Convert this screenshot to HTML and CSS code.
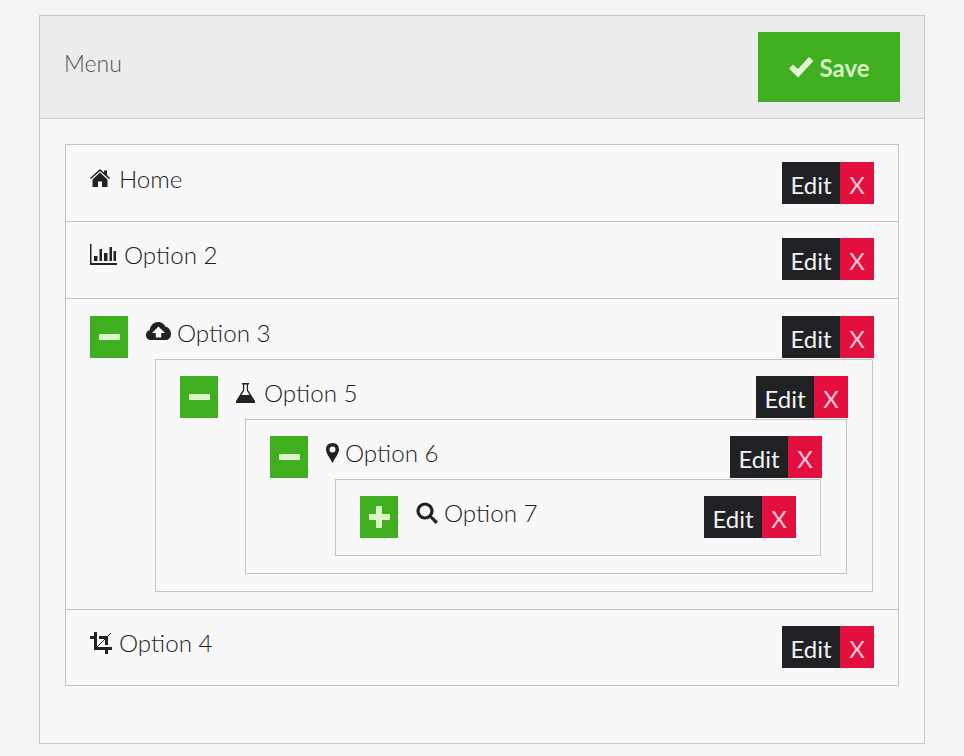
FILE: index.html
```html
<!DOCTYPE html>
<html lang="en">
<head>
  <meta charset="UTF-8" />
  <title>Menu</title>
  <link rel="stylesheet" href="styles.css">
</head>
<body>

  <div class="panel">
    <div class="panel-heading">
      <span class="panel-title">Menu</span>
      <button class="btn-save">
        <svg class="ico-check" viewBox="0 0 26 22"><path d="M1 12.5 L5 8.5 L10 13 L21 1 L25.500 5 L10 21.500 Z"/></svg>
        Save
      </button>
    </div>

    <div class="panel-body">
      <ul class="tree">
        <li class="item">
          <div class="row">
            <span class="label">
              <svg class="ico ico-home" viewBox="0 0 20 18"><path d="M10 0 L14 3.500 V1.500 H17 V6 L20 9 L19 10 L10 2 L1 10 L0 9 Z M2.500 10.500 L10 3.500 L17.500 10.500 V18 H12 V12.500 H8 V18 H2.500 Z"/></svg>
              Home
            </span>
            <span class="actions"><a class="edit">Edit</a><a class="del">X</a></span>
          </div>
        </li>

        <li class="item">
          <div class="row">
            <span class="label">
              <svg class="ico ico-stats" viewBox="0 0 27 21"><path d="M0 0 H1.500 V19 H27 V21 H0 Z M4 12 H7.500 V17 H4 Z M9.500 5 H12 V17 H9.500 Z M14 9 H17.500 V17 H14 Z M19.500 3 H22 V17 H19.500 Z M23.500 7 H26 V17 H23.500 Z"/></svg>
              Option 2
            </span>
            <span class="actions"><a class="edit">Edit</a><a class="del">X</a></span>
          </div>
        </li>

        <li class="item item-open">
          <div class="row">
            <a class="toggle"><i class="bar"></i></a>
            <span class="label">
              <svg class="ico ico-cloud" viewBox="0 0 25 18" fill-rule="evenodd"><path d="M4.500 18 C1.500 18 0 15.500 0 13 C0 10.500 1.500 8.500 3.800 8 C4.200 3.500 8 0 12 0 C15.500 0 18 2 19.500 4.800 C22.800 5.200 25 8.500 25 12 C25 15.500 22.800 18 20 18 Z M12.500 4.500 L6 11 H9.800 V15.500 H15.200 V11 H19 Z"/></svg>
              Option 3
            </span>
            <span class="actions"><a class="edit">Edit</a><a class="del">X</a></span>
          </div>

          <ul class="tree nested">
            <li class="item">
              <div class="row">
                <a class="toggle"><i class="bar"></i></a>
                <span class="label">
                  <svg class="ico ico-flask" viewBox="0 0 19 20"><path d="M6 0 H13 V1.500 H12 V7 L19 18 C19.500 19.200 18.800 20 18 20 H1 C0.200 20 -0.500 19.200 0 18 L7 7 V1.500 H6 Z M8.200 1.500 V7.500 L5.500 12 H13.500 L10.800 7.500 V1.500 Z" fill-rule="evenodd"/></svg>
                  Option 5
                </span>
                <span class="actions"><a class="edit">Edit</a><a class="del">X</a></span>
              </div>

              <ul class="tree nested">
                <li class="item">
                  <div class="row">
                    <a class="toggle"><i class="bar"></i></a>
                    <span class="label">
                      <svg class="ico ico-marker" viewBox="0 0 13 20" fill-rule="evenodd"><path d="M6.500 0 C10.500 0 13 2.800 13 6.500 C13 10.500 9 15 6.500 20 C4 15 0 10.500 0 6.500 C0 2.800 2.500 0 6.500 0 Z M6.500 3.500 A3 3 0 1 0 6.500 9.500 A3 3 0 1 0 6.500 3.500 Z"/></svg>
                      Option 6
                    </span>
                    <span class="actions"><a class="edit">Edit</a><a class="del">X</a></span>
                  </div>

                  <ul class="tree nested">
                    <li class="item">
                      <div class="row">
                        <a class="toggle"><i class="bar"></i><i class="bar bar-v"></i></a>
                        <span class="label">
                          <svg class="ico ico-search" viewBox="0 0 22 22"><circle cx="9" cy="9" r="7" fill="none" stroke="#222" stroke-width="3.200"/><path d="M13.500 15.500 L15.500 13.500 L22 19.500 L19.500 22 Z"/></svg>
                          Option 7
                        </span>
                        <span class="actions"><a class="edit">Edit</a><a class="del">X</a></span>
                      </div>
                    </li>
                  </ul>
                </li>
              </ul>
            </li>
          </ul>
        </li>

        <li class="item">
          <div class="row">
            <span class="label">
              <svg class="ico ico-crop" viewBox="0 0 22 22"><path d="M4 0 H7 V15 H22 V18 H18 V22 H15 V18 H4 V7 H0 V4 H4 Z M9 4 H18 V13 H15 V7 H9 Z"/><path d="M6 16 L21 1" fill="none" stroke="#222" stroke-width="1"/></svg>
              Option 4
            </span>
            <span class="actions"><a class="edit">Edit</a><a class="del">X</a></span>
          </div>
        </li>
      </ul>
    </div>
  </div>

</body>
</html>
```

FILE: styles.css
```css
* { box-sizing: border-box; }
html, body { height: 100%; }
body {
  font-family: 'Lato', 'Open Sans', sans-serif;
  background: #f4f4f4;
  color: #1c1c1c;
  margin: 0;
  padding: 15px 39px 12px;
  font-size: 24.2px;
  font-weight: 300;
  overflow: hidden;
}
.panel {
  height: 729px;
  background: #f8f8f8;
  border: 1px solid #c8c8c8;
}
.panel-heading {
  display: flex;
  align-items: center;
  justify-content: space-between;
  height: 103px;
  padding: 0 24px;
  background: #ececec;
  border-bottom: 1px solid #c8c8c8;
}
.panel-title {
  color: #555;
  font-size: 23px;
  margin-top: -9px;
}
.btn-save {
  display: flex;
  align-items: center;
  justify-content: center;
  gap: 5px;
  width: 142px;
  height: 70px;
  background: #3fae1f;
  border: none;
  color: #d6f5c4;
  font-family: inherit;
  font-size: 24px;
  font-weight: 700;
}
.ico-check { width: 26px; height: 22px; fill: #e2f8d6; }

.panel-body { padding: 25px; }
.tree {
  list-style: none;
  margin: 0;
  padding: 0;
  border-bottom: 1px solid #c4c4c4;
  border-left: 1px solid #c4c4c4;
  border-right: 1px solid #c4c4c4;
}
.item {
  border-top: 1px solid #c4c4c4;
  padding: 16.5px 24px;
}
.item-open { margin-top: 1px; }
.row {
  display: flex;
  align-items: flex-start;
  min-height: 42.5px;
}
.label {
  display: flex;
  align-items: center;
  gap: 6px;
  height: 33px;
  white-space: nowrap;
}
.ico { display: block; fill: #222; }
.ico-home { width: 20px; height: 18px; margin-right: 3px; }
.ico-stats { width: 27px; height: 21px; margin-right: 1px; }
.ico-cloud { width: 25px; height: 18px; margin-top: -2px; }
.ico-flask { width: 19px; height: 20px; margin-right: 3px; }
.ico-marker { width: 13px; height: 20px; }
.ico-search { width: 22px; height: 22px; }
.ico-crop { width: 22px; height: 22px; margin-top: 1px; margin-right: 1px; }

.toggle {
  position: relative;
  display: block;
  flex: none;
  width: 38px;
  height: 42px;
  margin-right: 18px;
  background: #3fae1f;
}
.bar {
  position: absolute;
  left: 9px;
  top: 18px;
  width: 21px;
  height: 6px;
  border-radius: 1px;
  background: #dcf6c8;
}
.bar-v {
  left: 16px;
  top: 10px;
  width: 6px;
  height: 22px;
}
.actions {
  display: flex;
  margin-left: auto;
  height: 42px;
  line-height: 46px;
  font-size: 24px;
  font-weight: 400;
}
.edit {
  width: 58px;
  text-align: center;
  background: #1f2124;
  color: #f2f2f2;
}
.del {
  width: 34px;
  text-align: center;
  background: #e3103f;
  color: #fbc4d6;
}
.nested {
  margin: 0.5px 1px 0 65px;
}
.nested .nested { margin-top: 0; }
.item > .nested { margin-bottom: 0.4px; }
```
